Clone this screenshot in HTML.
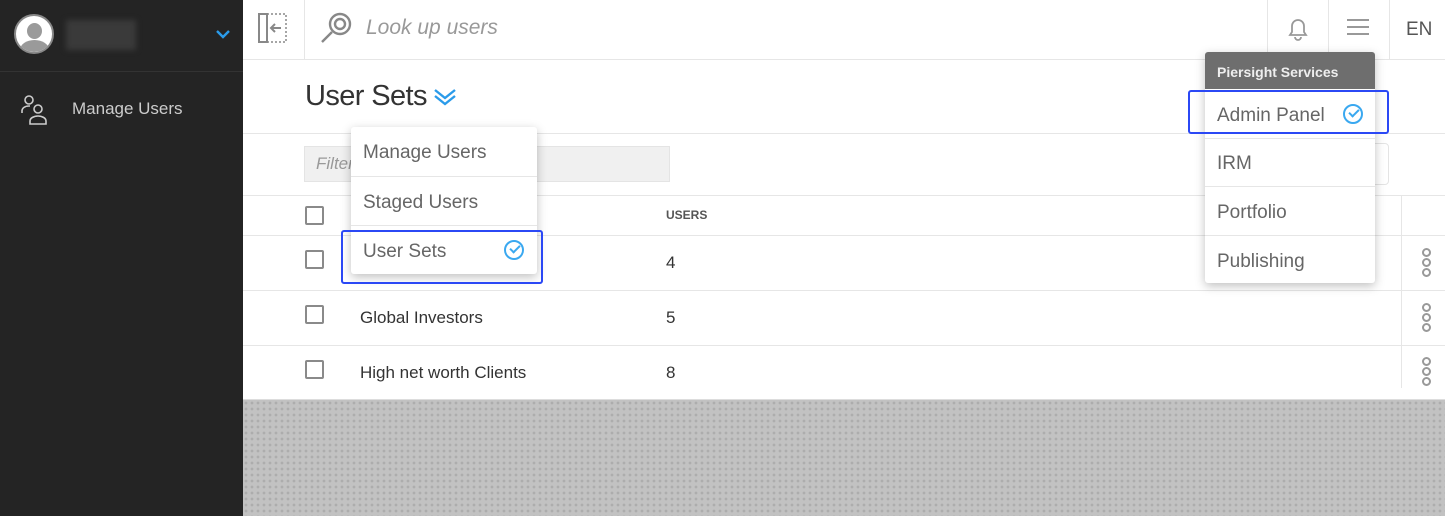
<!DOCTYPE html>
<html><head><style>
*{box-sizing:border-box;margin:0;padding:0}
body{width:1445px;height:516px;overflow:hidden;font-family:"Liberation Sans",sans-serif;background:#fff;position:relative}
.a{position:absolute}
.sb{left:0;top:0;width:243px;height:516px;background:#242424}
.hl{height:1px;background:#e6e6e6}
.vl{width:1px;background:#e6e6e6}
.cb{width:19px;height:19px;border:2px solid #8a8a8a;border-radius:2px;background:#fff}
.t{color:#333;font-size:17px}
.menu{background:#fff;box-shadow:0 3px 10px rgba(0,0,0,.25);border-radius:3px}
.mi{position:absolute;left:0;right:0;font-size:19px;color:#666;padding-left:12px}
.chk{position:absolute;width:20px;height:20px;border:2px solid #3aa8f0;border-radius:50%}
.chk:after{content:"";position:absolute;left:4px;top:3px;width:8px;height:4px;border-left:2px solid #3aa8f0;border-bottom:2px solid #3aa8f0;transform:rotate(-45deg)}
.dots{position:absolute;left:1422px;width:10px}
.dots i{display:block;width:9px;height:9px;border:2px solid #999;border-radius:50%;margin-bottom:1px}
</style></head><body>
<div class="a sb"></div>
<div class="a" style="left:14px;top:14px;width:40px;height:40px;border-radius:50%;background:#fff;border:2px solid #888;overflow:hidden">
 <div class="a" style="left:11px;top:7px;width:15px;height:16px;border-radius:50%;background:#9a9a9a"></div>
 <div class="a" style="left:4px;top:24px;width:29px;height:20px;border-radius:50% 50% 0 0;background:#9a9a9a"></div>
</div>
<div class="a" style="left:66px;top:20px;width:70px;height:30px;background:#3a3a3a;filter:blur(3px)"></div>
<svg class="a" style="left:216px;top:30px" width="14" height="9"><path d="M1 1 L7 7 L13 1" stroke="#2a9bea" stroke-width="2.4" fill="none"/></svg>
<div class="a" style="left:0;top:71px;width:243px;height:1px;background:#333"></div>
<svg class="a" style="left:20px;top:94px" width="30" height="32" fill="none" stroke="#ccc" stroke-width="1.6"><circle cx="9" cy="6" r="4"/><path d="M2 19v-2c0-3 3-5 7-5h1"/><circle cx="18" cy="15" r="4"/><path d="M10 30v-3c0-3 4-5 8-5s8 2 8 5v3z"/></svg>
<div class="a" style="left:72px;top:99px;color:#ccc;font-size:17px">Manage Users</div>

<div class="a hl" style="left:243px;top:59px;width:1202px"></div>
<div class="a vl" style="left:304px;top:0;height:59px"></div>
<div class="a vl" style="left:1267px;top:0;height:59px"></div>
<div class="a vl" style="left:1328px;top:0;height:59px"></div>
<div class="a vl" style="left:1389px;top:0;height:59px"></div>
<svg class="a" style="left:257px;top:12px" width="34" height="32" fill="none" stroke="#888" stroke-width="2"><rect x="2" y="2" width="8" height="28"/><rect x="10" y="2" width="19" height="28" stroke-dasharray="2 2" stroke-width="1.5"/><path d="M24 16H14M18 12l-4 4 4 4"/></svg>
<svg class="a" style="left:319px;top:11px" width="34" height="34" fill="none" stroke="#888" stroke-width="2.4"><circle cx="21" cy="13" r="10"/><circle cx="21" cy="13" r="5"/><path d="M13 21L3 31"/></svg>
<div class="a" style="left:366px;top:16px;font-size:21px;font-style:italic;color:#999">Look up users</div>
<svg class="a" style="left:1285px;top:16px" width="26" height="26" fill="none" stroke="#999" stroke-width="1.8"><path d="M5 19h16l-2-3v-6a6 6 0 0 0-12 0v6z"/><path d="M10 21a3 3 0 0 0 6 0"/></svg>
<svg class="a" style="left:1347px;top:18px" width="22" height="18" stroke="#999" stroke-width="2"><path d="M0 2h22M0 9h22M0 16h22"/></svg>
<div class="a" style="left:1406px;top:19px;font-size:19px;color:#555">EN</div>

<div class="a" style="left:305px;top:80px;font-size:29px;color:#333;letter-spacing:-0.6px">User Sets</div>
<svg class="a" style="left:433px;top:88px" width="24" height="18" fill="none" stroke="#2a9bea" stroke-width="2.4"><path d="M2 2l10 8 10-8M2 8l10 8 10-8"/></svg>
<div class="a hl" style="left:243px;top:133px;width:1202px"></div>
<div class="a" style="left:304px;top:146px;width:366px;height:36px;background:#f0f0f0;border:1px solid #e4e4e4"></div>
<div class="a" style="left:316px;top:154px;font-size:17px;font-style:italic;color:#999">Filter by set name</div>
<div class="a" style="left:1296px;top:143px;width:93px;height:42px;border:1px solid #e4e4e4;border-radius:4px"></div>
<div class="a" style="left:1311px;top:154px;font-size:17px;color:#eee">New set</div>
<div class="a hl" style="left:243px;top:195px;width:1202px"></div>
<div class="a cb" style="left:305px;top:206px"></div>
<div class="a" style="left:362px;top:208px;font-size:11px;font-weight:bold;color:#ccc">SET NAME ⬇</div>
<div class="a" style="left:666px;top:208px;font-size:12px;font-weight:bold;color:#555">USERS</div>
<div class="a hl" style="left:243px;top:235px;width:1202px"></div>
<div class="a cb" style="left:305px;top:250px"></div>
<div class="a" style="left:360px;top:253px;font-size:17px;color:#ddd">Discretionary Clients</div>
<div class="a t" style="left:666px;top:253px">4</div>
<div class="a hl" style="left:243px;top:290px;width:1202px"></div>
<div class="a cb" style="left:305px;top:305px"></div>
<div class="a t" style="left:360px;top:308px">Global Investors</div>
<div class="a t" style="left:666px;top:308px">5</div>
<div class="a hl" style="left:243px;top:345px;width:1202px"></div>
<div class="a cb" style="left:305px;top:360px"></div>
<div class="a t" style="left:360px;top:363px">High net worth Clients</div>
<div class="a t" style="left:666px;top:363px">8</div>
<div class="a vl" style="left:1401px;top:196px;height:192px"></div>
<div class="dots" style="top:248px"><i></i><i></i><i></i></div>
<div class="dots" style="top:303px"><i></i><i></i><i></i></div>
<div class="dots" style="top:357px"><i></i><i></i><i></i></div>

<div class="a" style="left:243px;top:399px;width:1202px;height:117px;background-color:#c2c2c2;background-image:radial-gradient(circle,#adadad 1.3px,transparent 1.5px);background-size:6px 6px;border-top:1px solid #ddd"></div>

<!-- left dropdown -->
<div class="a" style="left:433px;top:117px;width:0;height:0;border-left:10px solid transparent;border-right:10px solid transparent;border-bottom:10px solid #fff"></div>
<div class="a menu" style="left:351px;top:127px;width:186px;height:147px">
 <div class="mi" style="top:15px">Manage Users</div>
 <div class="a hl" style="left:0;top:49px;width:186px"></div>
 <div class="mi" style="top:65px">Staged Users</div>
 <div class="a hl" style="left:0;top:98px;width:186px"></div>
 <div class="mi" style="top:114px">User Sets</div>
 <div class="chk" style="left:153px;top:113px"></div>
</div>
<div class="a" style="left:341px;top:230px;width:202px;height:54px;border:2.5px solid #2b48f5;border-radius:3px"></div>

<!-- right dropdown -->
<div class="a menu" style="left:1205px;top:52px;width:170px;height:231px;overflow:hidden">
 <div class="a" style="left:0;top:0;width:170px;height:37px;background:#6e6e6e;color:#eee;font-weight:bold;font-size:14px;padding:12px 0 0 12px">Piersight Services</div>
 <div class="mi" style="top:53px">Admin Panel</div>
 <div class="chk" style="left:138px;top:52px"></div>
 <div class="a hl" style="left:0;top:86px;width:170px"></div>
 <div class="mi" style="top:101px">IRM</div>
 <div class="a hl" style="left:0;top:134px;width:170px"></div>
 <div class="mi" style="top:150px">Portfolio</div>
 <div class="a hl" style="left:0;top:183px;width:170px"></div>
 <div class="mi" style="top:199px">Publishing</div>
</div>
<div class="a" style="left:1188px;top:90px;width:201px;height:44px;border:2.5px solid #2b48f5;border-radius:3px"></div>
</body></html>
